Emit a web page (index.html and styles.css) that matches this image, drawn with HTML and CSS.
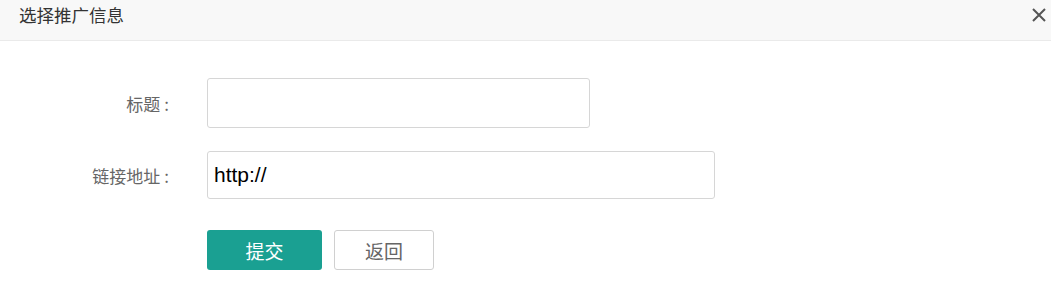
FILE: index.html
```
<!DOCTYPE html>
<html lang="zh">
<head>
<meta charset="utf-8">
<title>选择推广信息</title>
<link rel="stylesheet" href="styles.css">
</head>
<body>
<div class="dialog">
  <div class="header">
    <span class="title">选择推广信息</span>
    <span class="close" aria-label="关闭">
      <svg width="14" height="14" viewBox="0 0 14 14"><path d="M1 1L13 13M13 1L1 13" stroke="#555" stroke-width="2" fill="none"/></svg>
    </span>
  </div>
  <form class="form">
    <div class="row">
      <label class="label">标题<span class="colon">:</span></label>
      <input class="input input-title" type="text">
    </div>
    <div class="row">
      <label class="label">链接地址<span class="colon">:</span></label>
      <input class="input input-link" type="text" value="http://">
    </div>
    <div class="row actions">
      <button type="button" class="btn btn-primary">提交</button>
      <button type="button" class="btn btn-default">返回</button>
    </div>
  </form>
</div>
</body>
</html>
```
FILE: styles.css
```
html, body {
  margin: 0;
  padding: 0;
  background: #fff;
  font-family: "Noto Sans CJK SC", "Noto Sans", sans-serif;
}
.dialog {
  width: 1051px;
}
.header {
  height: 41px;
  background: #f8f8f8;
  border-bottom: 1px solid #eaeaea;
  display: flex;
  align-items: center;
  justify-content: space-between;
  padding: 0 5px 0 19px;
  box-sizing: border-box;
}
.title {
  font-size: 17.5px;
  color: #333;
  line-height: 1;
  margin-top: -11px;
}
.close {
  display: flex;
  margin-top: -11px;
}
.form {
  padding-top: 37px;
  display: flex;
  flex-direction: column;
}
.row {
  display: flex;
  align-items: center;
  margin-bottom: 23px;
}
.label {
  width: 169px;
  text-align: right;
  font-size: 17px;
  color: #666;
  margin-right: 38px;
}
.colon {
  margin-left: 4px;
}
.input {
  box-sizing: border-box;
  height: 49px;
  border: 1px solid #d6d6d6;
  border-radius: 3px;
  padding: 0 6px;
  font-family: "Liberation Sans", Arial, sans-serif;
  font-size: 21px;
  color: #000;
  outline: none;
  margin: 0;
}
.input-title { width: 383px; height: 50px; }
.input-link { width: 508px; height: 48px; }
.actions {
  padding-left: 207px;
  margin-top: 8px;
  gap: 12px;
}
.btn {
  box-sizing: border-box;
  height: 40px;
  border-radius: 3px;
  font-family: "Noto Sans CJK SC", sans-serif;
  font-size: 19px;
  margin: 0;
  padding: 0;
  cursor: pointer;
}
.btn-primary {
  width: 115px;
  background: #1aa092;
  border: none;
  color: #fff;
}
.btn-default {
  width: 100px;
  background: #fff;
  border: 1px solid #d0d0d0;
  color: #666;
}
```
